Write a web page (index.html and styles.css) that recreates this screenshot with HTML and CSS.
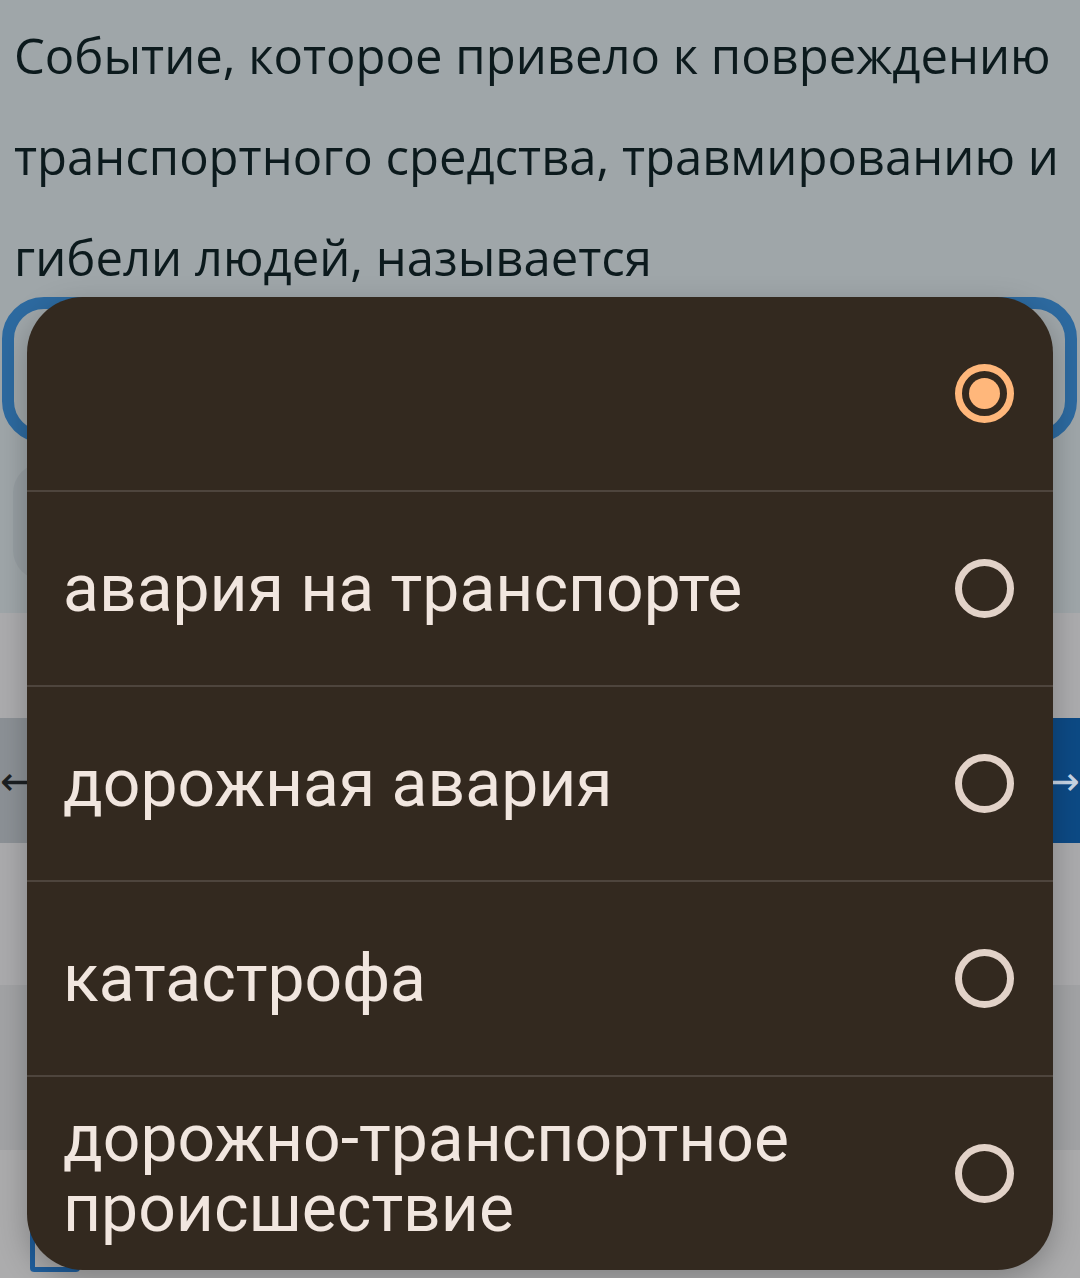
FILE: index.html
```html
<!DOCTYPE html>
<html lang="ru">
<head>
    <meta charset="UTF-8">
    <meta name="viewport" content="width=device-width, initial-scale=1.0">
    <title>Тест</title>
    <link rel="stylesheet" href="styles.css">
</head>
<body>
    <!-- Question page (dimmed under the picker) -->
    <div class="page">
        <p class="question">Событие, которое привело к повреждению транспортного средства, травмированию и гибели людей, называется</p>

        <div class="answer-select"></div>
        <div class="hint-box"></div>

        <div class="nav">
            <div class="nav-row">
                <button class="nav-prev">&larr;</button>
                <button class="nav-next">&rarr;</button>
            </div>
        </div>

        <div class="band-light"></div>
        <div class="band-mid"></div>
        <div class="band-foot">
            <span class="check"></span>
        </div>
    </div>

    <!-- Answer picker -->
    <div class="picker">
        <div class="picker-row">
            <span class="picker-text"></span>
            <span class="radio checked"></span>
        </div>
        <div class="picker-row">
            <span class="picker-text">авария на транспорте</span>
            <span class="radio"></span>
        </div>
        <div class="picker-row">
            <span class="picker-text">дорожная авария</span>
            <span class="radio"></span>
        </div>
        <div class="picker-row">
            <span class="picker-text">катастрофа</span>
            <span class="radio"></span>
        </div>
        <div class="picker-row">
            <span class="picker-text">дорожно-транспортное<br>происшествие</span>
            <span class="radio"></span>
        </div>
    </div>
</body>
</html>
```

FILE: styles.css
```css
body {
    margin: 0;
    padding: 0;
    width: 1080px;
    height: 1278px;
    overflow: hidden;
    position: relative;
    background-color: #9fa6a9;
    font-family: "Open Sans", Arial, sans-serif;
}

.page {
    display: flex;
    flex-direction: column;
}

.question {
    margin: 0;
    padding: 5px 14px 0;
    height: 297px;
    box-sizing: border-box;
    font-size: 49px;
    line-height: 101px;
    color: #0c1a1d;
}

.answer-select {
    margin: 0 3px 0 2px;
    height: 122px;
    border: 12px solid #2d6aa0;
    border-radius: 42px;
}

.hint-box {
    margin: 20px 0 0 13px;
    width: 600px;
    height: 117px;
    border-radius: 30px;
    background-color: #979ea2;
}

/* Navigation */
.nav {
    margin-top: 33px;
    padding-top: 105px;
    background-color: #acacae;
}

.nav-row {
    display: flex;
    height: 125px;
}

.nav-row button {
    border: none;
    padding: 0;
    font-size: 40px;
    line-height: 1;
    font-family: "DejaVu Sans", sans-serif;
}

.nav-prev {
    flex: 1;
    text-align: left;
    background-color: #8c9196;
    color: #1b1f22;
}

.nav-next {
    flex: 1;
    text-align: right;
    background-color: #0d4a85;
    color: #c8d6e6;
}

.band-light {
    height: 142px;
    background-color: #ababad;
}

.band-mid {
    height: 165px;
    background-color: #a2a3a5;
}

.band-foot {
    height: 140px;
    padding: 72px 0 0 30px;
    box-sizing: border-box;
    background-color: #acacad;
}

.check {
    display: block;
    width: 40px;
    height: 40px;
    border: 5px solid #1f5f9e;
    border-radius: 4px;
}

/* Picker dialog */
.picker {
    position: absolute;
    left: 27px;
    top: 297px;
    width: 1026px;
    height: 973px;
    display: flex;
    flex-direction: column;
    background-color: #33291f;
    border-radius: 56px;
    box-shadow: 0 10px 30px rgba(0, 0, 0, 0.25);
    overflow: hidden;
}

.picker-row {
    flex: 1;
    display: flex;
    align-items: center;
    justify-content: space-between;
    padding: 0 39px 0 36px;
}

.picker-row + .picker-row {
    border-top: 2px solid #4e453d;
}

.picker-text {
    font-family: Roboto, "Noto Sans", sans-serif;
    font-size: 66px;
    line-height: 70px;
    color: #f1e6df;
}

.radio {
    width: 45px;
    height: 45px;
    border: 7px solid #e2d2c8;
    border-radius: 50%;
    flex-shrink: 0;
    position: relative;
}

.radio.checked {
    border-color: #ffb77b;
}

.radio.checked::after {
    content: "";
    position: absolute;
    left: 7px;
    top: 7px;
    width: 31px;
    height: 31px;
    border-radius: 50%;
    background-color: #ffb77b;
}
```
